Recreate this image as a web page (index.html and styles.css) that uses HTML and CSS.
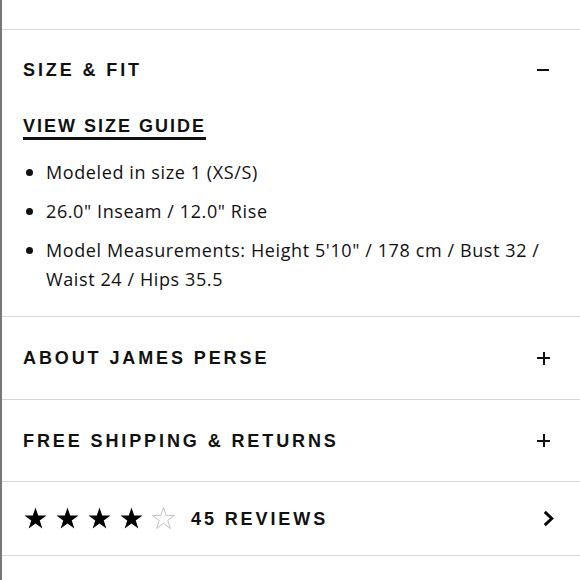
FILE: index.html
```html
<!DOCTYPE html>
<html>
<head>
<meta charset="utf-8">
<link rel="stylesheet" href="styles.css">
</head>
<body>
<div class="page">
  <div class="top"></div>
  <section class="section open">
    <div class="head">
      <h2 class="title">SIZE &amp; FIT</h2>
      <span class="minus"></span>
    </div>
    <a class="guide">VIEW SIZE GUIDE</a>
    <ul class="list">
      <li>Modeled in size 1 (XS/S)</li>
      <li>26.0" Inseam / 12.0" Rise</li>
      <li>Model Measurements: Height 5'10" / 178 cm / Bust 32 / Waist 24 / Hips 35.5</li>
    </ul>
  </section>
  <div class="row about">
    <h2 class="title">ABOUT JAMES PERSE</h2>
    <span class="plus"></span>
  </div>
  <div class="row ship">
    <h2 class="title">FREE SHIPPING &amp; RETURNS</h2>
    <span class="plus"></span>
  </div>
  <div class="row reviews">
    <div class="stars">
      <svg class="star" viewBox="0 0 24 24"><path d="M12 1.5l2.6 7.6h8l-6.5 4.8 2.5 7.7L12 16.8l-6.6 4.8 2.5-7.7L1.4 9.1h8z" fill="#000"/></svg>
      <svg class="star" viewBox="0 0 24 24"><path d="M12 1.5l2.6 7.6h8l-6.5 4.8 2.5 7.7L12 16.8l-6.6 4.8 2.5-7.7L1.4 9.1h8z" fill="#000"/></svg>
      <svg class="star" viewBox="0 0 24 24"><path d="M12 1.5l2.6 7.6h8l-6.5 4.8 2.5 7.7L12 16.8l-6.6 4.8 2.5-7.7L1.4 9.1h8z" fill="#000"/></svg>
      <svg class="star" viewBox="0 0 24 24"><path d="M12 1.5l2.6 7.6h8l-6.5 4.8 2.5 7.7L12 16.8l-6.6 4.8 2.5-7.7L1.4 9.1h8z" fill="#000"/></svg>
      <svg class="star" viewBox="0 0 24 24"><path d="M12 1.5l2.6 7.6h8l-6.5 4.8 2.5 7.7L12 16.8l-6.6 4.8 2.5-7.7L1.4 9.1h8z" fill="none" stroke="#aaa" stroke-width="0.7"/></svg>
    </div>
    <h2 class="title count">45 REVIEWS</h2>
    <svg class="chev" viewBox="0 0 12 16"><path d="M2.5 1.8l6.6 6.2-6.6 6.2" fill="none" stroke="#000" stroke-width="2.7"/></svg>
  </div>
</div>
</body>
</html>
```
FILE: styles.css
```css
html, body {
  margin: 0;
  padding: 0;
  background: #fff;
}
body {
  width: 580px;
  height: 580px;
  overflow: hidden;
}
.page {
  border-left: 2px solid #777;
  height: 580px;
  box-sizing: border-box;
  font-family: "Liberation Sans", Arial, sans-serif;
  color: #111;
}
.top {
  height: 29px;
  border-bottom: 1px solid #d8d8d8;
}
.section {
  padding: 29px 30px 22px 21px;
  border-bottom: 1px solid #d8d8d8;
}
.head {
  display: flex;
  align-items: center;
  justify-content: space-between;
  height: 22px;
}
.title {
  margin: 0;
  font-size: 18px;
  font-weight: bold;
  letter-spacing: 2.9px;
  line-height: 22px;
  color: #111;
}
.minus {
  width: 12px;
  height: 2px;
  background: #111;
  margin-right: 1px;
}
.plus {
  position: relative;
  width: 13px;
  height: 13px;
}
.plus::before, .plus::after {
  content: "";
  position: absolute;
  background: #111;
}
.plus::before {
  left: 0; right: 0; top: 5.5px; height: 2px;
}
.plus::after {
  top: 0; bottom: 0; left: 5.5px; width: 2px;
}
.guide {
  display: inline-block;
  margin-top: 34px;
  font-size: 18px;
  font-weight: bold;
  letter-spacing: 2px;
  line-height: 22px;
  border-bottom: 3px solid #111;
  color: #111;
}
.list {
  list-style: none;
  margin: 18px 0 0 0;
  padding: 0;
  font-family: "Open Sans", sans-serif;
  font-size: 18px;
  line-height: 29px;
  color: #111;
}
.list li {
  position: relative;
  padding-left: 23px;
  margin-bottom: 10px;
  letter-spacing: 0.6px;
}
.list li:last-child {
  margin-bottom: 0;
}
.list li::before {
  content: "";
  position: absolute;
  left: 3px;
  top: 11px;
  width: 7px;
  height: 7px;
  border-radius: 50%;
  background: #111;
}
.row {
  display: flex;
  align-items: center;
  justify-content: space-between;
  padding: 0 30px 0 21px;
  border-bottom: 1px solid #d8d8d8;
}
.about { height: 82px; }
.ship { height: 81px; }
.reviews {
  height: 73px;
  justify-content: flex-start;
}
.stars {
  display: flex;
  gap: 7px;
}
.star {
  width: 25px;
  height: 25px;
  display: block;
}
.count {
  margin-left: 15px;
}
.chev {
  width: 13px;
  height: 17px;
  margin-left: auto;
  margin-right: -5px;
}
```
